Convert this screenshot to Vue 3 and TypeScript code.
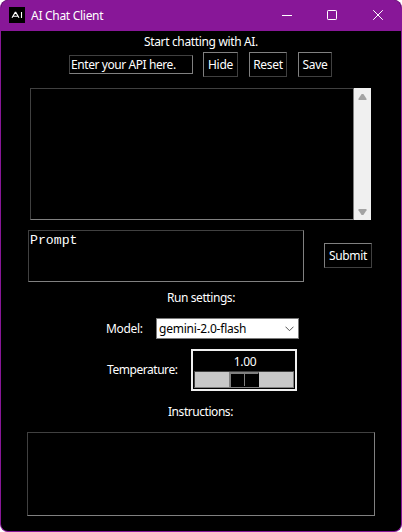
<script setup lang="ts">
import { ref } from 'vue'

const apiKey = ref('Enter your API here.')
const prompt = ref('Prompt')
const model = ref('gemini-2.0-flash')
const temperature = ref(1)
const keyActions = [
  { label: 'Hide', cls: 'hide' },
  { label: 'Reset', cls: 'reset' },
  { label: 'Save', cls: 'save' },
]
</script>

<template>
  <div class="window">
    <header class="titlebar">
      <svg class="logo" width="16" height="16" viewBox="0 0 16 16">
        <rect width="16" height="16" fill="#000" />
        <path d="M3 10.8 L6.2 5.4 H6.8 L10 10.8 M4.4 9.3 H8.8 M12.5 5 V11" fill="none" stroke="#fff" stroke-width="1.1" />
      </svg>
      <h1 class="title">AI Chat Client</h1>
      <div class="controls">
        <svg width="10" height="11" viewBox="0 0 10 11">
          <path d="M0 5.5H10" stroke="#fff" fill="none" />
        </svg>
        <svg width="10" height="11" viewBox="0 0 10 11">
          <rect x=".5" y=".5" width="9" height="9" rx="0.7" stroke="#fff" fill="none" />
        </svg>
        <svg width="10" height="11" viewBox="0 0 10 11">
          <path d="M.2 .2L9.8 9.8M9.8 .2L.2 9.8" stroke="#fff" fill="none" />
        </svg>
      </div>
    </header>

    <main class="content">
      <p class="label heading">Start chatting with AI.</p>
      <div class="key-row">
        <div class="sunken entry">{{ apiKey }}</div>
        <button v-for="a in keyActions" :key="a.label" class="btn" :class="a.cls">{{ a.label }}</button>
      </div>

      <div class="chat">
        <div class="sunken log"></div>
        <div class="scrollbar">
          <svg width="9" height="6" viewBox="0 0 9 6"><path d="M.5 6V4.8L3.6 0H5.4L8.5 4.8V6Z" fill="#a3a3a3" /></svg>
          <svg width="9" height="6" viewBox="0 0 9 6"><path d="M.5 0V1.2L3.6 6H5.4L8.5 1.2V0Z" fill="#a3a3a3" /></svg>
        </div>
      </div>

      <div class="prompt-row">
        <div class="sunken prompt">{{ prompt }}</div>
        <button class="btn submit">Submit</button>
      </div>

      <p class="label run">Run settings:</p>
      <div class="model-row">
        <span class="label model-label">Model:</span>
        <div class="combo">
          <span class="combo-value">{{ model }}</span>
          <svg width="9" height="6" viewBox="0 0 9 6"><path d="M.5 .7L4.5 4.7L8.5 .7" stroke="#555" fill="none" /></svg>
        </div>
      </div>
      <div class="temp-row">
        <span class="label temp-label">Temperature:</span>
        <div class="scale">
          <span class="label scale-value">{{ temperature.toFixed(2) }}</span>
          <div class="trough"><div class="thumb"><i class="notch"></i></div></div>
        </div>
      </div>
      <p class="label instr">Instructions:</p>
      <div class="sunken instructions"></div>
    </main>
  </div>
</template>

<style>
body {
  margin: 0;
  background: #fff;
}
</style>

<style scoped>
* {
  box-sizing: border-box;
}
.window {
  width: 402px;
  height: 532px;
  overflow: hidden;
  display: flex;
  flex-direction: column;
  background: #000;
  border: 1px solid #881798;
  border-top: 0;
  border-radius: 8px;
  font: 12px/16px "Noto Sans", "Open Sans", sans-serif;
  color: #fff;
}
.titlebar {
  flex: none;
  height: 31px;
  display: flex;
  align-items: center;
  padding: 0 18px 0 8px;
  background: #881798;
}
.logo {
  flex: none;
  margin-bottom: 1px;
}
.title {
  flex: 1;
  margin: 1px 0 0 6px;
  font-size: 12px;
  font-weight: 400;
  letter-spacing: -0.29px;
  white-space: nowrap;
}
.controls {
  flex: none;
  width: 101px;
  height: 11px;
  display: flex;
  gap: 35px;
}
.controls svg:last-child {
  margin-left: 1px;
}
.content {
  display: flex;
  flex-direction: column;
}
.label {
  margin: 0;
  height: 16px;
  white-space: nowrap;
  letter-spacing: -0.35px;
}
.heading {
  margin: 3px 0 0 143px;
}
.key-row {
  display: flex;
  align-items: center;
  height: 25px;
  margin: 2px 0 0 68px;
}
.sunken {
  border: 1px solid #808080;
  border-top-color: #404040;
  border-left-color: #404040;
}
.entry {
  width: 124px;
  height: 19px;
  margin-right: 10px;
  padding: 1px 0 0 1px;
  white-space: nowrap;
  letter-spacing: -0.42px;
}
.btn {
  flex: none;
  height: 25px;
  padding: 1px 0 0;
  border: 1px solid #404040;
  border-top-color: #808080;
  border-left-color: #808080;
  background: #000;
  color: #fff;
  font: inherit;
  letter-spacing: -0.3px;
  white-space: nowrap;
}
.hide {
  width: 35px;
}
.reset {
  width: 38px;
  margin: 0 11px;
}
.save {
  width: 34px;
}
.chat {
  display: flex;
  height: 132px;
  margin: 11px 0 0 29px;
}
.log {
  width: 324px;
}
.scrollbar {
  width: 17px;
  display: flex;
  flex-direction: column;
  align-items: center;
  justify-content: space-between;
  padding: 6px 0 5px;
  background: #f0f0f0;
}
.prompt-row {
  display: flex;
  align-items: center;
  height: 52px;
  margin: 10px 0 0 27px;
}
.prompt {
  width: 276px;
  height: 52px;
  padding: 2px 0 0 1px;
  font: 13.2px/16px "Liberation Mono", monospace;
}
.submit {
  width: 48px;
  margin: 0 0 1px 20px;
}
.run {
  margin: 8px 0 0 166px;
  letter-spacing: -0.42px;
}
.model-row {
  display: flex;
  align-items: center;
  height: 21px;
  margin: 12px 0 0 105px;
}
.model-label {
  width: 50px;
}
.combo {
  width: 143px;
  height: 21px;
  display: flex;
  align-items: center;
  justify-content: space-between;
  padding: 0 4px 0 2px;
  border: 1px solid #7a7a7a;
  background: #fff;
  color: #000;
}
.combo-value {
  letter-spacing: -0.22px;
}
.temp-row {
  display: flex;
  align-items: center;
  height: 42px;
  margin: 10px 0 0 106px;
}
.temp-label {
  width: 84px;
  letter-spacing: -0.45px;
}
.scale {
  width: 106px;
  height: 42px;
  padding: 3px 1px 1px;
  border: 2px solid #f0f0f0;
  display: flex;
  flex-direction: column;
  justify-content: space-between;
}
.scale-value {
  padding-left: 2px;
  text-align: center;
}
.trough {
  height: 17px;
  padding: 0 0 0 34px;
  border: 1px solid #808080;
  border-top-color: #404040;
  border-left-color: #404040;
  background: #c8c8c8;
}
.thumb {
  width: 30px;
  height: 15px;
  display: flex;
  justify-content: center;
  border: solid #808080;
  border-width: 2px 0 0 2px;
  border-right: 1px solid #000;
  background: #000;
}
.notch {
  width: 1px;
  height: 12px;
  background: #808080;
}
.instr {
  margin: 13px 0 0 167px;
  letter-spacing: -0.45px;
}
.instructions {
  width: 348px;
  height: 84px;
  margin: 12px 0 0 26px;
}
</style>
